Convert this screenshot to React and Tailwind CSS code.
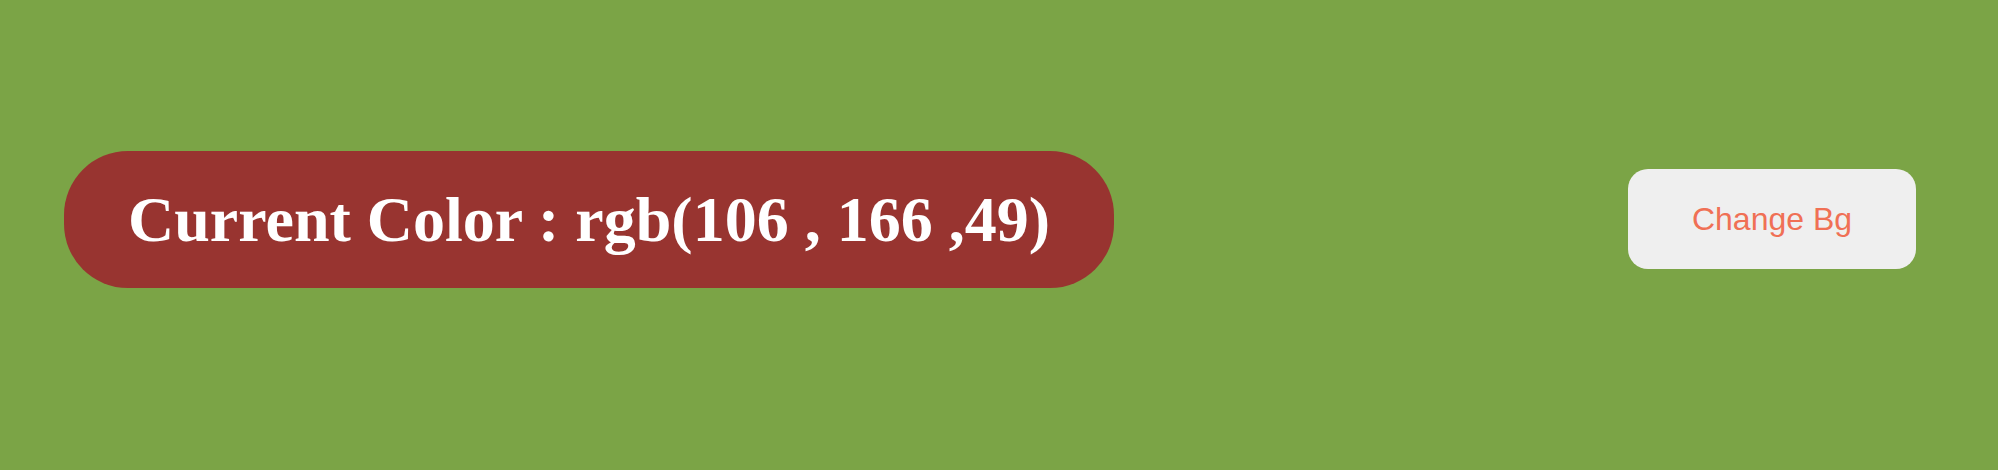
import React, { useState } from "react";

const App = () => {
  const [color] = useState("rgb(106 , 166 ,49)");

  return (
    <div className="w-full h-[470px] bg-[#7ba446] flex items-center justify-between pl-[64px] pr-[82px] pb-[32px]">
      {/* Current colour label */}
      <h1 className="bg-[#983430] text-white rounded-[64px] px-[64px] py-[32px] text-[64px] font-bold leading-[73px] font-['Liberation_Serif',serif] whitespace-nowrap">
        Current Color : {color}
      </h1>

      {/* Button */}
      <button className="w-[288px] h-[100px] bg-[#efefef] rounded-[20px] text-[#f07055] text-[32px] font-['Liberation_Sans',Arial,sans-serif]">
        Change Bg
      </button>
    </div>
  );
};

export default App;
